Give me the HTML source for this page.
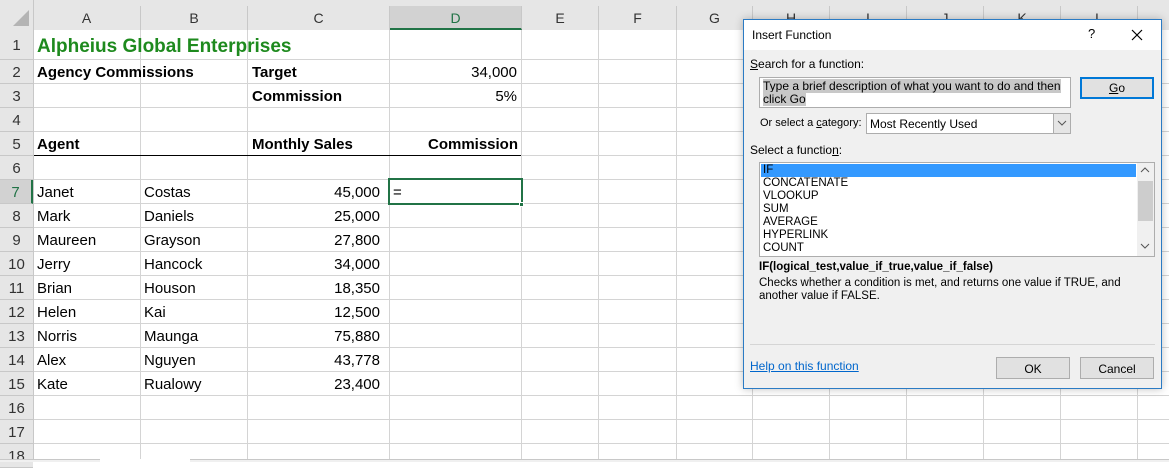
<!DOCTYPE html>
<html><head><meta charset="utf-8"><style>
*{margin:0;padding:0;box-sizing:border-box}
body{width:1169px;height:462px;overflow:hidden;background:#fff;position:relative;font-family:"Liberation Sans",sans-serif;color:#000}
.a{position:absolute;white-space:nowrap}
.c{position:absolute;height:24px;line-height:26px;font-size:15px;white-space:nowrap}
.b{font-weight:bold}
.r{text-align:right}
.hd{position:absolute;top:6px;height:24px;line-height:24px;text-align:center;font-size:14px;color:#333;background:#e6e6e6;border-right:1px solid #c8c8c8}
.rh{position:absolute;left:0;width:33px;height:24px;line-height:26px;text-align:center;font-size:15px;color:#333;background:#e6e6e6;border-bottom:1px solid #c8c8c8}
.d{font-size:12px;color:#000}
.btn{position:absolute;background:#e1e1e1;border:1px solid #adadad;font-size:12px;text-align:center;line-height:20px}
</style></head><body>
<div class="a" style="left:0;top:0;width:1169px;height:30px;background:#e6e6e6"></div>
<svg class="a" style="left:0;top:0" width="1169" height="462">
<polygon points="29,10 29,26 13,26" fill="#b4b4b4"/>
<g stroke="#d4d4d4" stroke-width="1">
<line x1="33" y1="59.5" x2="1169" y2="59.5"/><line x1="33" y1="83.5" x2="1169" y2="83.5"/><line x1="33" y1="107.5" x2="1169" y2="107.5"/><line x1="33" y1="131.5" x2="1169" y2="131.5"/><line x1="33" y1="155.5" x2="1169" y2="155.5"/><line x1="33" y1="179.5" x2="1169" y2="179.5"/><line x1="33" y1="203.5" x2="1169" y2="203.5"/><line x1="33" y1="227.5" x2="1169" y2="227.5"/><line x1="33" y1="251.5" x2="1169" y2="251.5"/><line x1="33" y1="275.5" x2="1169" y2="275.5"/><line x1="33" y1="299.5" x2="1169" y2="299.5"/><line x1="33" y1="323.5" x2="1169" y2="323.5"/><line x1="33" y1="347.5" x2="1169" y2="347.5"/><line x1="33" y1="371.5" x2="1169" y2="371.5"/><line x1="33" y1="395.5" x2="1169" y2="395.5"/><line x1="33" y1="419.5" x2="1169" y2="419.5"/><line x1="33" y1="443.5" x2="1169" y2="443.5"/>
<line x1="140.5" y1="30" x2="140.5" y2="462"/><line x1="247.5" y1="30" x2="247.5" y2="462"/><line x1="389.5" y1="30" x2="389.5" y2="462"/><line x1="521.5" y1="30" x2="521.5" y2="462"/><line x1="598.5" y1="30" x2="598.5" y2="462"/><line x1="676.5" y1="30" x2="676.5" y2="462"/><line x1="752.5" y1="30" x2="752.5" y2="462"/><line x1="829.5" y1="30" x2="829.5" y2="462"/><line x1="906.5" y1="30" x2="906.5" y2="462"/><line x1="983.5" y1="30" x2="983.5" y2="462"/><line x1="1060.5" y1="30" x2="1060.5" y2="462"/><line x1="1137.5" y1="30" x2="1137.5" y2="462"/>
</g>
<line x1="33" y1="155.5" x2="521" y2="155.5" stroke="#000" stroke-width="1"/>
</svg>
<div class="hd" style="left:33px;width:108px">A</div>
<div class="hd" style="left:141px;width:107px">B</div>
<div class="hd" style="left:248px;width:142px">C</div>
<div class="hd" style="left:390px;width:132px;background:#d2d2d2;color:#217346;border-bottom:2px solid #217346">D</div>
<div class="hd" style="left:522px;width:77px">E</div>
<div class="hd" style="left:599px;width:78px">F</div>
<div class="hd" style="left:677px;width:76px">G</div>
<div class="hd" style="left:753px;width:77px">H</div>
<div class="hd" style="left:830px;width:77px">I</div>
<div class="hd" style="left:907px;width:77px">J</div>
<div class="hd" style="left:984px;width:77px">K</div>
<div class="hd" style="left:1061px;width:77px">L</div>
<div class="a" style="left:33px;top:0;width:1px;height:462px;background:#c8c8c8"></div>
<div class="rh" style="top:30px;height:30px;line-height:32px">1</div>
<div class="rh" style="top:60px">2</div><div class="rh" style="top:84px">3</div><div class="rh" style="top:108px">4</div><div class="rh" style="top:132px">5</div><div class="rh" style="top:156px">6</div>
<div class="rh" style="top:180px;background:#d2d2d2;color:#217346;border-right:2px solid #217346">7</div>
<div class="rh" style="top:204px">8</div><div class="rh" style="top:228px">9</div><div class="rh" style="top:252px">10</div><div class="rh" style="top:276px">11</div><div class="rh" style="top:300px">12</div><div class="rh" style="top:324px">13</div><div class="rh" style="top:348px">14</div><div class="rh" style="top:372px">15</div><div class="rh" style="top:396px">16</div><div class="rh" style="top:420px">17</div><div class="rh" style="top:444px">18</div>

<div class="c b" style="left:37px;top:32px;font-size:19px;color:#1e8a1e;line-height:30px">Alpheius Global Enterprises</div>
<div class="c b" style="left:37px;top:60px">Agency Commissions</div>
<div class="c b" style="left:252px;top:60px">Target</div>
<div class="c r" style="left:390px;width:127px;top:60px">34,000</div>
<div class="c b" style="left:252px;top:84px">Commission</div>
<div class="c r" style="left:390px;width:127px;top:84px">5%</div>
<div class="c b" style="left:37px;top:132px">Agent</div>
<div class="c b" style="left:252px;top:132px">Monthly Sales</div>
<div class="c b r" style="left:390px;width:128px;top:132px">Commission</div>

<div class="c" style="left:37px;top:180px">Janet</div><div class="c" style="left:144px;top:180px">Costas</div><div class="c r" style="left:248px;width:132px;top:180px">45,000</div>
<div class="c" style="left:37px;top:204px">Mark</div><div class="c" style="left:144px;top:204px">Daniels</div><div class="c r" style="left:248px;width:132px;top:204px">25,000</div>
<div class="c" style="left:37px;top:228px">Maureen</div><div class="c" style="left:144px;top:228px">Grayson</div><div class="c r" style="left:248px;width:132px;top:228px">27,800</div>
<div class="c" style="left:37px;top:252px">Jerry</div><div class="c" style="left:144px;top:252px">Hancock</div><div class="c r" style="left:248px;width:132px;top:252px">34,000</div>
<div class="c" style="left:37px;top:276px">Brian</div><div class="c" style="left:144px;top:276px">Houson</div><div class="c r" style="left:248px;width:132px;top:276px">18,350</div>
<div class="c" style="left:37px;top:300px">Helen</div><div class="c" style="left:144px;top:300px">Kai</div><div class="c r" style="left:248px;width:132px;top:300px">12,500</div>
<div class="c" style="left:37px;top:324px">Norris</div><div class="c" style="left:144px;top:324px">Maunga</div><div class="c r" style="left:248px;width:132px;top:324px">75,880</div>
<div class="c" style="left:37px;top:348px">Alex</div><div class="c" style="left:144px;top:348px">Nguyen</div><div class="c r" style="left:248px;width:132px;top:348px">43,778</div>
<div class="c" style="left:37px;top:372px">Kate</div><div class="c" style="left:144px;top:372px">Rualowy</div><div class="c r" style="left:248px;width:132px;top:372px">23,400</div>

<div class="a" style="left:388px;top:178px;width:135px;height:27px;border:2px solid #217346"></div>
<div class="a" style="left:519px;top:202px;width:5px;height:5px;background:#217346;border:1px solid #fff"></div>
<div class="c" style="left:393px;top:180px">=</div>

<div class="a" style="left:0;top:459px;width:1169px;height:3px;background:#f0f0f0;border-top:1px solid #c8c8c8"></div>
<div class="a" style="left:100px;top:459px;width:90px;height:3px;background:#fff"></div>

<!-- dialog -->
<div class="a" style="left:743px;top:19px;width:419px;height:370px;background:#f0f0f0;border:1px solid #2b7bc4;box-shadow:0 0 8px rgba(0,0,0,.25)"></div>
<div class="a" style="left:744px;top:20px;width:417px;height:30px;background:#fff"></div>
<div class="a d" style="left:752px;top:28px">Insert Function</div>
<div class="a d" style="left:1088px;top:26px;font-size:13px">?</div>
<svg class="a" style="left:1131px;top:29px" width="12" height="12"><path d="M1 1L11 11M11 1L1 11" stroke="#000" stroke-width="1.2"/></svg>
<div class="a d" style="left:750px;top:57px"><u>S</u>earch for a function:</div>
<div class="a" style="left:759px;top:77px;width:312px;height:31px;background:#fff;border:1px solid #adadad"></div>
<div class="a d" style="left:763px;top:80px;line-height:13px"><span style="background:#c8c8c8">Type a brief description of what you want to do and then</span><br><span style="background:#c8c8c8">click Go</span></div>
<div class="btn" style="left:1080px;top:77px;width:74px;height:22px;border:2px solid #0078d7;line-height:18px"><u>G</u>o</div>
<div class="a d" style="left:760px;top:117px;font-size:11px">Or select a <u>c</u>ategory:</div>
<div class="a" style="left:866px;top:113px;width:205px;height:21px;background:#fff;border:1px solid #adadad"></div>
<div class="a d" style="left:870px;top:117px">Most Recently Used</div>
<div class="a" style="left:1053px;top:114px;width:17px;height:19px;background:#e5e5e5;border-left:1px solid #adadad"></div>
<svg class="a" style="left:1057px;top:120px" width="10" height="6"><path d="M1 1L5 5L9 1" stroke="#555" fill="none"/></svg>
<div class="a d" style="left:750px;top:143px">Select a functio<u>n</u>:</div>
<div class="a" style="left:759px;top:162px;width:396px;height:95px;background:#fff;border:1px solid #adadad"></div>
<div class="a" style="left:761px;top:164px;width:375px;height:13px;background:#3399ff"></div>
<div class="a d" style="left:763px;top:164px;line-height:13px;font-size:11.5px">IF<br>CONCATENATE<br>VLOOKUP<br>SUM<br>AVERAGE<br>HYPERLINK<br>COUNT</div>
<div class="a" style="left:1137px;top:163px;width:17px;height:93px;background:#f0f0f0"></div>
<div class="a" style="left:1138px;top:181px;width:15px;height:40px;background:#cdcdcd"></div>
<svg class="a" style="left:1140px;top:167px" width="10" height="6"><path d="M1 5L5 1L9 5" stroke="#555" fill="none"/></svg>
<svg class="a" style="left:1140px;top:243px" width="10" height="6"><path d="M1 1L5 5L9 1" stroke="#555" fill="none"/></svg>
<div class="a d b" style="left:759px;top:261px;font-size:11.5px">IF(logical_test,value_if_true,value_if_false)</div>
<div class="a d" style="left:759px;top:277px;line-height:13px;font-size:11.5px">Checks whether a condition is met, and returns one value if TRUE, and<br>another value if FALSE.</div>
<div class="a" style="left:750px;top:344px;width:405px;height:1px;background:#d5d5d5"></div>
<div class="a d" style="left:750px;top:359px;color:#0066cc;text-decoration:underline">Help on this function</div>
<div class="btn" style="left:996px;top:357px;width:74px;height:22px;line-height:22px">OK</div>
<div class="btn" style="left:1080px;top:357px;width:74px;height:22px;line-height:22px">Cancel</div>
</body></html>
